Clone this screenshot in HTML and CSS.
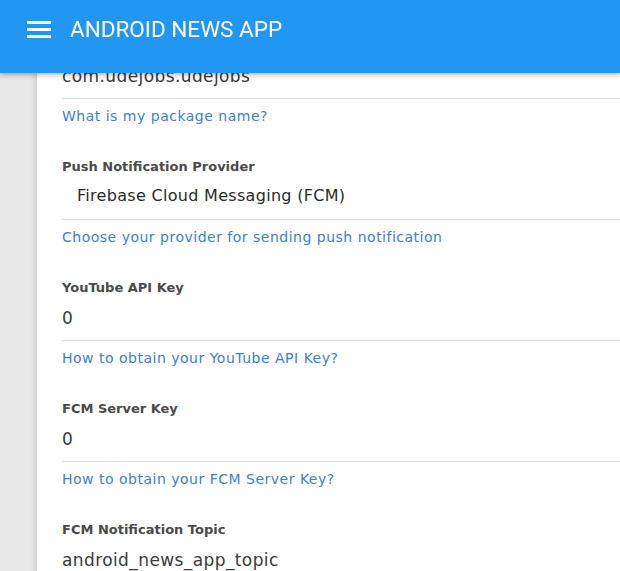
FILE: index.html
```html
<!DOCTYPE html>
<html lang="en">
<head>
<meta charset="utf-8">
<title>Android News App</title>
<link rel="stylesheet" href="styles.css">
</head>
<body>
<header class="appbar">
  <button class="menu-btn" aria-label="Menu">
    <svg width="24" height="17" viewBox="0 0 24 17"><rect x="0" y="0" width="24" height="3" fill="#fff"/><rect x="0" y="7" width="24" height="3" fill="#fff"/><rect x="0" y="14" width="24" height="3" fill="#fff"/></svg>
  </button>
  <h1 class="title">ANDROID NEWS APP</h1>
</header>
<main class="page">
  <section class="card">
    <div class="field first">
      <div class="input">com.udejobs.udejobs</div>
      <a class="help">What is my package name?</a>
    </div>
    <div class="field">
      <label class="label">Push Notification Provider</label>
      <div class="input select">Firebase Cloud Messaging (FCM)</div>
      <a class="help">Choose your provider for sending push notification</a>
    </div>
    <div class="field">
      <label class="label">YouTube API Key</label>
      <div class="input">0</div>
      <a class="help">How to obtain your YouTube API Key?</a>
    </div>
    <div class="field">
      <label class="label">FCM Server Key</label>
      <div class="input">0</div>
      <a class="help">How to obtain your FCM Server Key?</a>
    </div>
    <div class="field">
      <label class="label">FCM Notification Topic</label>
      <div class="input">android_news_app_topic</div>
      <a class="help">How to obtain your FCM Notification Topic?</a>
    </div>
  </section>
</main>
</body>
</html>
```
FILE: styles.css
```css
html, body {
  margin: 0;
  padding: 0;
  height: 100%;
  overflow: hidden;
}
body {
  background: #e8e8e8;
  font-family: "DejaVu Sans", "Open Sans", sans-serif;
}
.appbar {
  position: fixed;
  top: 0;
  left: 0;
  right: 0;
  height: 73px;
  background: #2196f3;
  box-shadow: 0 2px 5px rgba(0,0,0,0.28);
  display: flex;
  align-items: flex-start;
  z-index: 10;
}
.menu-btn {
  margin: 21px 0 0 27px;
  padding: 0;
  border: 0;
  background: none;
  width: 24px;
  height: 17px;
  display: block;
}
.menu-btn svg { display: block; }
.title {
  margin: 15px 0 0 19px;
  font-family: Roboto, "Liberation Sans", sans-serif;
  font-weight: 400;
  font-size: 22.5px;
  line-height: 28px;
  color: #fff;
}
.page {
  padding-left: 37px;
  margin-top: 58px;
}
.card {
  background: #fff;
  padding-left: 25px;
  box-shadow: -2px 0 6px rgba(0,0,0,0.12);
}
.field {
  display: flex;
  flex-direction: column;
  padding-bottom: 29px;
}
.label {
  font-size: 13px;
  font-weight: 600;
  line-height: 24px;
  color: #4a4a4a;
}
.input {
  font-size: 17px;
  letter-spacing: 0.4px;
  line-height: 36px;
  height: 36px;
  padding-bottom: 4px;
  color: #3a3a3a;
  border-bottom: 1px solid #dcdcdc;
}
.input.select {
  padding-left: 15px;
  font-size: 16px;
  letter-spacing: 0.3px;
  line-height: 34px;
  height: 34px;
  padding-bottom: 6px;
  color: #2a2a2a;
}
.help {
  margin-top: 7px;
  font-size: 14px;
  letter-spacing: 0.5px;
  line-height: 20px;
  color: #3b7fcf;
}
```
